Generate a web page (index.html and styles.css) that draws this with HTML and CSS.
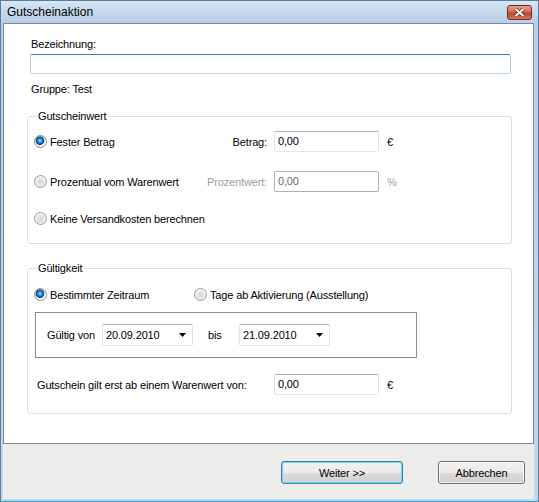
FILE: index.html
```html
<!DOCTYPE html>
<html lang="de">
<head>
<meta charset="utf-8">
<title>Gutscheinaktion</title>
<link rel="stylesheet" href="styles.css">
</head>
<body>
<div class="window">
  <div class="titlebar">
    <span class="title">Gutscheinaktion</span>
    <span class="close" aria-label="Schließen">
      <svg width="25" height="15" viewBox="0 0 25 15">
        <defs>
          <linearGradient id="closeFill" x1="0" y1="0" x2="0" y2="1">
            <stop offset="0" stop-color="#e8a797"/>
            <stop offset=".48" stop-color="#d2654f"/>
            <stop offset=".52" stop-color="#c0412a"/>
            <stop offset="1" stop-color="#d77a63"/>
          </linearGradient>
        </defs>
        <rect x=".5" y=".5" width="24" height="14" rx="2.5" fill="url(#closeFill)" stroke="#6e2c22"/>
        <path d="M8.5 4l8 7M16.5 4l-8 7" stroke="#5b2419" stroke-width="3.6"/>
        <path d="M8.5 4l8 7M16.5 4l-8 7" stroke="#fff" stroke-width="2"/>
      </svg>
    </span>
  </div>

  <div class="client">
    <div class="panel">
      <div class="label name-label">Bezeichnung:</div>
      <div class="textbox name-box focused"></div>
      <div class="label group-name">Gruppe: Test</div>

      <section class="group value-group">
        <div class="group-title">Gutscheinwert</div>
        <div class="row first-row">
          <span class="radio value-radio checked"><span class="mark"></span>Fester Betrag</span>
          <span class="field-label">Betrag:</span>
          <div class="textbox amount">0,00</div>
          <span class="unit">€</span>
        </div>
        <div class="row percent-row">
          <span class="radio value-radio"><span class="mark"></span>Prozentual vom Warenwert</span>
          <span class="field-label disabled">Prozentwert:</span>
          <div class="textbox amount disabled">0,00</div>
          <span class="unit disabled">%</span>
        </div>
        <div class="row shipping-row">
          <span class="radio"><span class="mark"></span>Keine Versandkosten berechnen</span>
        </div>
      </section>

      <section class="group validity-group">
        <div class="group-title">Gültigkeit</div>
        <div class="row mode-row">
          <span class="radio mode-radio checked"><span class="mark"></span>Bestimmter Zeitraum</span>
          <span class="radio"><span class="mark"></span>Tage ab Aktivierung (Ausstellung)</span>
        </div>
        <div class="date-box">
          <span class="date-label">Gültig von</span>
          <div class="combo"><span>20.09.2010</span><svg width="7" height="4" viewBox="0 0 7 4"><polygon points="0,0 7,0 3.5,4" fill="#000"/></svg></div>
          <span class="until-label">bis</span>
          <div class="combo"><span>21.09.2010</span><svg width="7" height="4" viewBox="0 0 7 4"><polygon points="0,0 7,0 3.5,4" fill="#000"/></svg></div>
        </div>
        <div class="row minimum-row">
          <span class="minimum-label">Gutschein gilt erst ab einem Warenwert von:</span>
          <div class="textbox amount">0,00</div>
          <span class="unit">€</span>
        </div>
      </section>
    </div>

    <div class="footer">
      <span class="btn default next">Weiter &gt;&gt;</span>
      <span class="btn cancel">Abbrechen</span>
    </div>
  </div>
</div>
</body>
</html>
```

FILE: styles.css
```css
* { box-sizing: border-box; }

html, body {
  margin: 0;
  padding: 0;
  background: #fff;
}

body {
  font-family: "Liberation Sans", Arial, sans-serif;
  font-size: 11px;
  letter-spacing: -0.15px;
  color: #000;
}

/* window frame */
.window {
  width: 539px;
  height: 502px;
  display: flex;
  flex-direction: column;
  background: linear-gradient(#d9e6f4 0, #c3d8ed 11px, #b7cfe9 22px, #c1d7ec 100%);
  border: 1px solid #5c7c9c;
  border-bottom-color: #2aa6d4;
  padding: 0 4px 2px 2px;
}

.titlebar {
  height: 22px;
  flex: none;
  display: flex;
  align-items: center;
  justify-content: space-between;
  padding: 0 2px 0 4px;
}

.title {
  font-size: 12px;
  letter-spacing: 0;
  color: #000;
}

.close {
  display: block;
  width: 25px;
  height: 15px;
}
.close svg { display: block; }

.client {
  flex: 1;
  display: flex;
  flex-direction: column;
  background: #ecedea;
}

/* white content panel */
.panel {
  height: 421px;
  flex: none;
  background: #fff;
  border: 1px solid #828790;
  display: flex;
  flex-direction: column;
  align-items: flex-start;
}

.label {
  line-height: 13px;
  margin-left: 27px;
}
.name-label { margin-top: 14px; }
.group-name { margin-top: 9px; }

.textbox {
  height: 21px;
  background: #fff;
  border: 1px solid;
  border-color: #abadb3 #dbdfe6 #e3e9ef #e2e3ea;
  border-radius: 2px;
  padding: 0 3px;
  line-height: 19px;
}
.textbox.focused {
  border-color: #3d7bad #a4c9e3 #b7d9ed #b5cfe7;
}
.textbox.disabled {
  border-color: #adb2b5;
  color: #6d6d6d;
}

.name-box {
  height: 20px;
  width: 481px;
  margin: 3px 0 0 26px;
}

/* group boxes */
.group {
  align-self: stretch;
  margin: 0 21px 0 23px;
  border: 1px solid #d5dfe5;
  border-radius: 3px;
  padding: 0 0 0 6px;
  display: flex;
  flex-direction: column;
  align-items: flex-start;
}
.group-title {
  margin: -7px 0 0 3px;
  padding: 0 2px 0 1px;
  line-height: 13px;
  background: #fff;
}

.value-group { margin-top: 20px; padding-bottom: 14px; }
.validity-group { margin-top: 24px; padding-bottom: 18px; }

.row {
  height: 21px;
  display: flex;
  align-items: center;
}
.first-row { margin-top: 8px; }
.percent-row { margin-top: 19px; }
.shipping-row { margin-top: 16px; }
.mode-row { margin-top: 9px; }
.minimum-row { margin-top: 16px; margin-left: 3px; }

.radio {
  display: flex;
  align-items: center;
  white-space: nowrap;
}
.value-radio { width: 150px; }
.mode-radio { width: 160px; }

.mark {
  width: 13px;
  height: 13px;
  margin-right: 3px;
  border-radius: 50%;
  border: 1px solid #979a9c;
  background: radial-gradient(circle at 50% 55%, #d6d6d6 0, #e6e6e6 3.5px, #f8f8f8 6px);
  flex: none;
}
.radio.checked .mark {
  border-color: #8a8d90;
  background: radial-gradient(circle at 45% 42%, #bdeeff 0, #44a8ea 1.4px, #1165bb 3px, #0b3f7e 3.9px, #d4d4d4 4.5px, #efefef 5.2px, #fbfbfb 6px);
}

.field-label {
  width: 83px;
  text-align: right;
  margin-right: 7px;
}
.disabled { color: #a0a0a0; }
.field-label.disabled { color: #9d9d9d; }

.amount { width: 105px; }

.unit { margin-left: 8px; }

.minimum-label { width: 237px; }

/* date range box */
.date-box {
  margin: 7px 0 0 1px;
  width: 382px;
  height: 46px;
  border: 1px solid #8c8c8c;
  display: flex;
  align-items: center;
  padding-left: 11px;
}
.date-label { width: 55px; }
.until-label { margin-left: 15px; width: 31px; }

.combo {
  width: 91px;
  height: 22px;
  display: flex;
  align-items: center;
  justify-content: space-between;
  padding: 0 6px 0 3px;
  background: #fff;
  border: 1px solid;
  border-color: #abadb3 #dbdfe6 #e3e9ef #e2e3ea;
  border-radius: 2px;
}
.combo svg { display: block; }

/* dialog buttons */
.footer {
  flex: 1;
  display: flex;
  justify-content: flex-end;
  align-items: flex-start;
  padding: 17px 9px 0 0;
}

.btn {
  height: 23px;
  display: flex;
  align-items: center;
  justify-content: center;
  border: 1px solid #707070;
  border-radius: 3px;
  background: linear-gradient(#f2f2f2 0, #ebebeb 50%, #dddddd 50%, #cfcfcf 100%);
  box-shadow: inset 0 0 0 1px rgba(255, 255, 255, 0.75);
}
.btn.default {
  border-color: #3c7fb1;
  box-shadow: inset 0 0 0 1px #6fd3f5;
}
.next { width: 122px; }
.cancel { width: 87px; margin-left: 35px; }
```
